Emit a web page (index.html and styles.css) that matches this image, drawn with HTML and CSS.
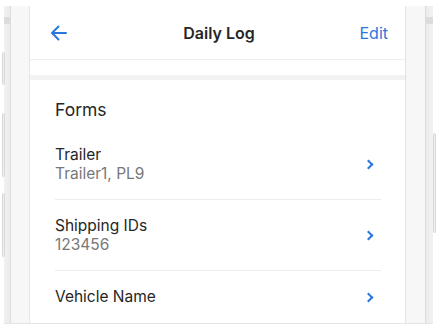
FILE: index.html
```html
<!DOCTYPE html>
<html lang="en">

<head>
    <meta charset="UTF-8">
    <meta name="viewport" content="width=device-width, initial-scale=1.0">
    <title>Daily Log</title>
    <link rel="stylesheet" href="styles.css">
</head>

<body>
    <div class="phone">
        <span class="side-btn btn-1"></span>
        <span class="side-btn btn-2"></span>
        <span class="side-btn btn-3"></span>
        <span class="side-btn btn-right"></span>

        <div class="bezel bezel-left">
            <div class="bezel-outer"><span class="notch"></span></div>
            <div class="bezel-inner"></div>
        </div>

        <div class="screen">
            <header class="nav-bar">
                <button class="back-btn" aria-label="Back">
                    <svg width="17" height="16" viewBox="0 0 17 16">
                        <path d="M16 8H2M8.5 1.5L2 8l6.5 6.5" fill="none" stroke="#2b77e0" stroke-width="2"
                            stroke-linecap="round" stroke-linejoin="round" />
                    </svg>
                </button>
                <h1>Daily Log</h1>
                <button class="edit-btn">Edit</button>
            </header>

            <div class="spacer"></div>

            <section class="forms">
                <h2>Forms</h2>

                <div class="form-row">
                    <div class="row-text">
                        <div class="row-title">Trailer</div>
                        <div class="row-value">Trailer1, PL9</div>
                    </div>
                    <span class="chevron"></span>
                </div>

                <div class="form-row">
                    <div class="row-text">
                        <div class="row-title">Shipping IDs</div>
                        <div class="row-value">123456</div>
                    </div>
                    <span class="chevron"></span>
                </div>

                <div class="form-row">
                    <div class="row-text">
                        <div class="row-title">Vehicle Name</div>
                    </div>
                    <span class="chevron"></span>
                </div>
            </section>
        </div>

        <div class="bezel bezel-right">
            <div class="bezel-inner"></div>
            <div class="bezel-outer"><span class="notch"></span></div>
        </div>
    </div>
</body>

</html>
```

FILE: styles.css
```css
* {
    margin: 0;
    padding: 0;
    box-sizing: border-box;
}

body {
    font-family: Inter, 'Noto Sans', sans-serif;
    background: #fff;
    color: #262626;
    padding: 6px 8px 0 4px;
}

.phone {
    position: relative;
    display: flex;
    width: 429px;
    height: 318px;
    border-bottom: 1px solid #e4e4e4;
}

/* frame */
.bezel {
    display: flex;
    flex-shrink: 0;
}

.bezel-outer {
    width: 8px;
    background: linear-gradient(90deg, #f2f2f2, #ebebeb);
    padding-top: 11px;
}

.bezel-inner {
    width: 18px;
    background: #f7f7f7;
}

.bezel-left .bezel-outer {
    width: 7px;
    border-right: 1px solid #dedede;
}

.bezel-left .bezel-inner {
    width: 19px;
    border-right: 1px solid #e6e6e6;
}

.bezel-right .bezel-inner {
    width: 21px;
    border-left: 1px solid #e2e2e2;
    border-right: 1px solid #dcdcdc;
}

.bezel-right .bezel-outer {
    width: 7px;
    background: linear-gradient(90deg, #ececec, #f2f2f2);
}

.notch {
    display: block;
    height: 7px;
    background: #dcdcdc;
}

.side-btn {
    position: absolute;
    width: 3px;
    border: 1px solid #d8d8d8;
    border-radius: 2px;
    background: #efefef;
}

.btn-1 {
    left: -2px;
    top: 46px;
    height: 33px;
}

.btn-2 {
    left: -2px;
    top: 107px;
    height: 64px;
}

.btn-3 {
    left: -2px;
    top: 187px;
    height: 64px;
}

.btn-right {
    right: -3px;
    top: 127px;
    height: 100px;
}

/* screen */
.screen {
    flex: 1;
    background: #fff;
    overflow: hidden;
}

.nav-bar {
    display: flex;
    align-items: center;
    justify-content: space-between;
    height: 54px;
    padding: 0 17px 0 20px;
    border-bottom: 1px solid #eeeeee;
}

.nav-bar h1 {
    font-size: 16px;
    font-weight: 600;
    color: #262626;
}

.back-btn,
.edit-btn {
    background: none;
    border: none;
    font-family: inherit;
    cursor: pointer;
}

.back-btn {
    display: flex;
    width: 40px;
}

.edit-btn {
    font-size: 16px;
    color: #2b77e0;
    width: 40px;
    text-align: right;
}

.spacer {
    height: 20px;
    border-bottom: 5px solid #f2f2f2;
}

.forms {
    padding: 0 24px 0 25px;
}

.forms h2 {
    font-size: 17.5px;
    font-weight: 400;
    line-height: 20px;
    padding: 20px 0 9px;
    color: #262626;
}

.form-row {
    display: flex;
    align-items: center;
    justify-content: space-between;
    padding: 16px 0;
    border-bottom: 1px solid #ececec;
}

.row-title {
    font-size: 15.5px;
    line-height: 19px;
    color: #262626;
}

.row-value {
    font-size: 15.5px;
    line-height: 19px;
    color: #787878;
}

.form-row:last-child .row-title {
    line-height: 20px;
}

.chevron {
    width: 7px;
    height: 7px;
    border-right: 2px solid #2b77e0;
    border-top: 2px solid #2b77e0;
    transform: rotate(45deg);
    margin-right: 9px;
}
```
